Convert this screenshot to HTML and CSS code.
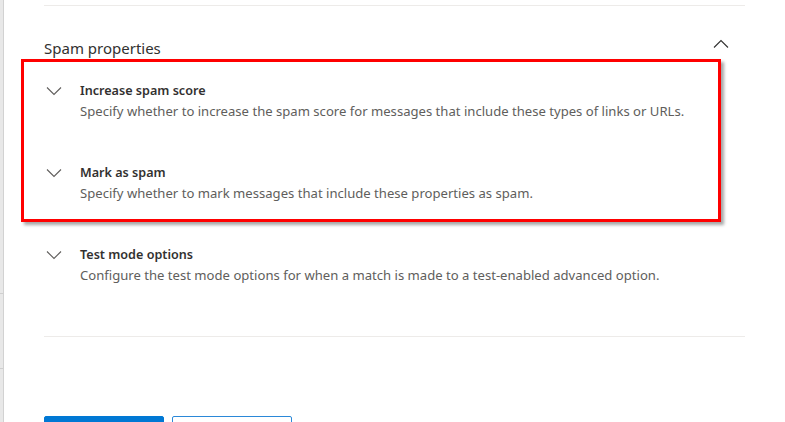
FILE: index.html
```html
<!DOCTYPE html>
<html lang="en">
<head>
<meta charset="utf-8">
<title>Spam properties</title>
<link rel="stylesheet" href="styles.css">
</head>
<body>
<div class="app">
  <div class="strip">
    <div class="strip-line line-a"></div>
    <div class="strip-line line-b"></div>
  </div>
  <div class="main">
    <div class="divider top"></div>
    <div class="section-head">
      <h2 class="section-title">Spam properties</h2>
      <svg class="chev" width="16" height="9" viewBox="0 0 16 9"><path d="M1 8.5 L8 1.5 L15 8.5" fill="none" stroke="#323130" stroke-width="1.1"/></svg>
    </div>
    <div class="rows">
      <div class="row">
        <svg class="chev row-chev" width="16" height="9" viewBox="0 0 16 9"><path d="M1 0.5 L8 7.5 L15 0.5" fill="none" stroke="#605e5c" stroke-width="1.1"/></svg>
        <div class="row-text">
          <div class="row-title">Increase spam score</div>
          <div class="row-desc">Specify whether to increase the spam score for messages that include these types of links or URLs.</div>
        </div>
      </div>
      <div class="row">
        <svg class="chev row-chev" width="16" height="9" viewBox="0 0 16 9"><path d="M1 0.5 L8 7.5 L15 0.5" fill="none" stroke="#605e5c" stroke-width="1.1"/></svg>
        <div class="row-text">
          <div class="row-title">Mark as spam</div>
          <div class="row-desc">Specify whether to mark messages that include these properties as spam.</div>
        </div>
      </div>
      <div class="row">
        <svg class="chev row-chev" width="16" height="9" viewBox="0 0 16 9"><path d="M1 0.5 L8 7.5 L15 0.5" fill="none" stroke="#605e5c" stroke-width="1.1"/></svg>
        <div class="row-text">
          <div class="row-title">Test mode options</div>
          <div class="row-desc">Configure the test mode options for when a match is made to a test-enabled advanced option.</div>
        </div>
      </div>
    </div>
    <div class="divider bottom"></div>
    <div class="buttons">
      <button class="btn primary" aria-label="Save"></button>
      <button class="btn secondary" aria-label="Cancel"></button>
    </div>
    <div class="highlight"></div>
  </div>
</div>
</body>
</html>
```
FILE: styles.css
```css
* { box-sizing: border-box; }
html, body {
  margin: 0;
  padding: 0;
  background: #ffffff;
  overflow: hidden;
  height: 422px;
}
body {
  font-family: "Noto Sans", "Open Sans", "Liberation Sans", sans-serif;
  color: #323130;
}
.app {
  display: flex;
  height: 422px;
  overflow: hidden;
}
.strip {
  position: relative;
  width: 4px;
  flex: none;
  background: #e8e8e8;
  border-right: 1px solid #d2d2d2;
}
.strip-line {
  position: absolute;
  left: 0;
  width: 3px;
  height: 1px;
  background: #cfcfcf;
}
.line-a { top: 293px; }
.line-b { top: 368px; }
.main {
  position: relative;
  flex: none;
  width: 741px;
  padding-left: 40px;
}
.divider {
  height: 1px;
  background: #edebe9;
}
.divider.top { margin-top: 5px; }
.section-head {
  display: flex;
  align-items: center;
  justify-content: space-between;
  margin-top: 31px;
  height: 22px;
  padding-right: 16px;
}
.section-title {
  margin: 0;
  font-size: 15px;
  font-weight: 400;
  line-height: 22px;
  color: #323130;
}
.section-head .chev { margin-top: -10px; }
.rows {
  display: flex;
  flex-direction: column;
  gap: 42px;
  margin-top: 22px;
}
.row {
  display: flex;
  align-items: flex-start;
}
.row-chev {
  flex: none;
  margin-left: 2px;
  margin-top: 6px;
  margin-right: 18px;
}
.row-text {
  display: flex;
  flex-direction: column;
}
.row-title {
  font-size: 12.6px;
  font-weight: 600;
  line-height: 20px;
  color: #323130;
}
.row-desc {
  font-size: 13.1px;
  line-height: 20px;
  color: #605e5c;
}
.divider.bottom { margin-top: 51px; }
.buttons {
  display: flex;
  gap: 8px;
  margin-top: 79px;
}
.btn {
  flex: none;
  width: 120px;
  height: 32px;
  border-radius: 2px;
}
.btn.primary {
  background: #0078d4;
  border: 1px solid #0078d4;
}
.btn.secondary {
  background: #ffffff;
  border: 1px solid #2b88d8;
}
.highlight {
  position: absolute;
  left: 17px;
  top: 59px;
  width: 700px;
  height: 163px;
  border: 3px solid #ff0000;
  box-shadow: 3px 3px 3px rgba(0, 0, 0, 0.35);
  pointer-events: none;
}
```
